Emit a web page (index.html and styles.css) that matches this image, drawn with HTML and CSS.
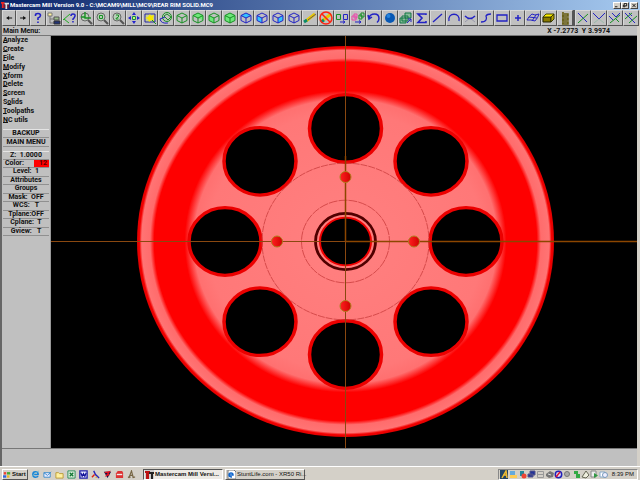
FILE: index.html
```
<!DOCTYPE html>
<html lang="en">
<head>
<meta charset="utf-8">
<title>Mastercam Mill Version 9.0</title>
<link rel="stylesheet" href="styles.css">
</head>
<body>
<svg class="defs" aria-hidden="true">
  <symbol id="cube" viewBox="0 0 16 16"><path d="M3 5.500 8 3l5 2.500v5L8 13l-5-2.500zM3 5.500 8 8l5-2.500M8 8v5"/></symbol>
  <symbol id="lens" viewBox="0 0 16 16"><path d="m10 10 4 4" stroke="#555" stroke-width="2"/><circle cx="7" cy="7" r="4" fill="#b8d0b8" stroke="#666" stroke-width="1"/></symbol>
</svg>

<header class="titlebar">
  <svg class="app-icon" viewBox="0 0 9 9"><path d="M0 1h4v2H3v5H1V3H0z" fill="#e22"/><path d="M4 2h5v2H7v5H5V4H4z" fill="#ddd"/><path d="M4 4v4M8 4v4" stroke="#a11"/></svg>
  <h1>Mastercam Mill Version 9.0 - C:\MCAM9\MILL\MC9\REAR RIM SOLID.MC9</h1>
  <div class="controls">
    <button aria-label="Minimize"><svg viewBox="0 0 7 6"><path d="M1 4.500h3"/></svg></button>
    <button aria-label="Restore"><svg viewBox="0 0 7 6"><path d="M2.500 2V.5h3v3H4M1.500 2.500h2v2h-2z"/></svg></button>
    <button class="close" aria-label="Close"><svg viewBox="0 0 7 6"><path d="m1.500 1 4 4m0-4-4 4"/></svg></button>
  </div>
</header>

<div class="app">
  <nav class="toolbar" aria-label="Tools">
    <button class="slim" aria-label="Previous"><svg viewBox="0 0 14 16"><path class="solid" d="m4 8 3-2v1.500h3v1H7V10z"/></svg></button>
    <button class="slim" aria-label="Next"><svg viewBox="0 0 14 16"><path class="solid" d="M10 8 7 6v1.500H4v1h3V10z"/></svg></button>
    <button aria-label="Help"><svg class="blue" viewBox="0 0 16 16"><path stroke-width="1.600" d="M5.500 6V5q0-1.500 2.500-1.500T10.500 5.500Q10.500 7 8 8v2M8 11.500V13"/></svg></button>
    <button aria-label="File manager"><svg viewBox="0 0 16 16"><path d="M2 3h4v3H2z" fill="#fff3a0" stroke="#777"/><path d="M4 6v7h4M4 9h4" stroke="#777"/><path d="M8 7h5v3H8z" fill="#9b8" stroke="#555"/><path d="M8 11h6v3H8z" fill="#237" stroke="#333"/></svg></button>
    <button aria-label="Analyze"><svg viewBox="0 0 16 16"><path d="m1 10 7-6M2 9l5 4" stroke="#2a2"/><path class="bl" stroke-width="1.500" d="M9 6q0-2 2-2 2.500 0 2 2T11 9v1M11 11v1.500"/></svg></button>
    <button aria-label="Zoom"><svg viewBox="0 0 16 16"><use href="#lens"/><path class="gr" stroke-width="1.400" d="M7 2v6h6M3 7h4"/></svg></button>
    <button aria-label="Zoom window"><svg viewBox="0 0 16 16"><use href="#lens"/><path class="gr" d="M5.500 5.500h3v3h-3z"/></svg></button>
    <button aria-label="Unzoom"><svg viewBox="0 0 16 16"><use href="#lens"/><path class="gr" d="M6 5h2.500v2L6 8.500V9h2.500"/></svg></button>
    <button aria-label="Fit"><svg viewBox="0 0 16 16"><path d="M6.500 6.500h3v3h-3z" fill="#cf7" stroke="#184"/><path fill="#22c" d="m8 2 2 3H6zM8 14l2-3H6zM2 8l3-2v4zM14 8l-3-2v4z"/></svg></button>
    <button aria-label="Repaint"><svg viewBox="0 0 16 16"><path d="M3 4h10v8H3z" fill="#c8d090" stroke="#22a"/><path d="m8 4 1 2 3-1-1 3 1 3-3-1-2 2-1-3-3-1 3-1z" fill="#f6e800"/><path d="m10 10 4 4" class="gr"/></svg></button>
    <button aria-label="Dynamic view"><svg viewBox="0 0 16 16"><circle class="gr" cx="9" cy="7" r="4.500"/><path class="gr" d="m6 6 3-2 4 3-3 3z"/><path class="bl" d="M2 9q1 5 8 4M2 9l5-2"/></svg></button>
    <button aria-label="Isometric view"><svg class="green" viewBox="0 0 16 16"><use href="#cube"/></svg></button>
    <button aria-label="Top view"><svg class="green" viewBox="0 0 16 16"><path class="mint" d="m3 5.500 5-2.500 5 2.500v5L8 8z"/><use href="#cube"/></svg></button>
    <button aria-label="Front view"><svg class="green" viewBox="0 0 16 16"><path class="mint" d="m3 5.500 5 2.500v5l-5-2.500z"/><use href="#cube"/></svg></button>
    <button aria-label="Side view"><svg class="green" viewBox="0 0 16 16"><path class="mint" d="m3 5.500 5-2.500 5 2.500v5L8 13l-5-2.500z"/><use href="#cube"/></svg></button>
    <button aria-label="Plane top"><svg class="blue" viewBox="0 0 16 16"><path class="cyan" d="m3 5.500 5-2.500 5 2.500L8 8z"/><use href="#cube"/></svg></button>
    <button aria-label="Plane front"><svg class="blue" viewBox="0 0 16 16"><path class="cyan" d="m3 5.500 5 2.500v5l-5-2.500z"/><use href="#cube"/></svg></button>
    <button aria-label="Plane side"><svg class="blue" viewBox="0 0 16 16"><path class="cyan" d="m8 8 5-2.500v5L8 13z"/><use href="#cube"/></svg></button>
    <button aria-label="Plane 3D"><svg class="blue" viewBox="0 0 16 16"><use href="#cube"/></svg></button>
    <button aria-label="Delete"><svg viewBox="0 0 16 16"><path d="m4 11 9-7" stroke="#e8c800" stroke-width="3"/><path d="m6 10 8-6" stroke="#655"/><path d="m2 12 3-2" stroke="#0a8a6a" stroke-width="3"/></svg></button>
    <button aria-label="Undelete"><svg viewBox="0 0 16 16"><path d="m4 11 9-7" stroke="#e8c800" stroke-width="3"/><path d="m3 12 3-2" stroke="#0a8a6a" stroke-width="3"/><circle cx="8" cy="8" r="6" stroke="#f21" stroke-width="1.500"/><path d="m4 4 8 8" stroke="#f21" stroke-width="1.500"/></svg></button>
    <button aria-label="Group result"><svg viewBox="0 0 16 16"><path class="gr" d="M2.500 4.500h4v5h-4z"/><path class="bl" d="M9.500 4.500h4v5h-4zM6 12h5M9 10.500l2 1.500-2 1.500"/></svg></button>
    <button aria-label="Translate"><svg viewBox="0 0 16 16"><path d="M2 6h4v4H2zM4 4h3v4H4z" stroke="#e4a"/><path class="gr" d="M9 5h3v4H9zM11 3h3v4h-3z"/><path class="bl" d="M5 12h6M9 10.500l2 1.500-2 1.500"/></svg></button>
    <button aria-label="Undo"><svg class="blue" viewBox="0 0 16 16"><path stroke-width="1.500" d="M3 8q1-4 5.500-4T13 8.500q0 2.500-2 4M2 5l1 4 3-2"/></svg></button>
    <button aria-label="Shade"><svg viewBox="0 0 16 16"><circle cx="8" cy="8" r="5" fill="#0758b4"/><circle cx="6.500" cy="6" r="2" fill="#2583dc"/></svg></button>
    <button aria-label="Level"><svg viewBox="0 0 16 16"><path d="M2 8h6v5H2zM7 3h6v5H7z" fill="#8b9" stroke="#174"/><path d="M4 6h6v5H4z" stroke="#174"/><path class="bl" d="m9 13 4-4m-3 0h3v3"/></svg></button>
    <button aria-label="Sum"><svg class="blue" viewBox="0 0 16 16"><path stroke-width="1.600" d="M12 5V4H4l4 4-4 4.500h8V11"/></svg></button>
    <button aria-label="Line"><svg class="blue" viewBox="0 0 16 16"><path stroke-width="1.300" d="m3 12 9-8"/></svg></button>
    <button aria-label="Arc"><svg class="blue" viewBox="0 0 16 16"><path stroke-width="1.300" d="M3 11C1 2 15 2 13 11"/></svg></button>
    <button aria-label="Fillet"><svg viewBox="0 0 16 16"><path d="m3 12 5-4 5 4" stroke="#99a"/><path class="bl" stroke-width="1.500" d="M3 6q5 5 10 0"/></svg></button>
    <button aria-label="Spline"><svg class="blue" viewBox="0 0 16 16"><path stroke-width="1.300" d="M3 12q4 0 5-2T8 6q1-2 5-2"/></svg></button>
    <button aria-label="Rectangle"><svg class="blue" viewBox="0 0 16 16"><path stroke-width="1.300" d="M3 5h10v6H3z"/></svg></button>
    <button aria-label="Point"><svg class="blue" viewBox="0 0 16 16"><path stroke-width="1.500" d="M8 5v6M5 8h6"/></svg></button>
    <button aria-label="Surface"><svg class="blue" viewBox="0 0 16 16"><path d="M2 10q2-4 5-6l3 1 4-1q-1 4-4 7l-4-1zM4 7l8 1M7 11l4-6"/></svg></button>
    <button aria-label="Solid"><svg viewBox="0 0 16 16"><path d="M2 7h8v5H2z" fill="#8a7a00" stroke="#220"/><path d="m2 7 3-3h8l-3 3z" fill="#fff000" stroke="#440"/><path d="m10 7 3-3v5l-3 3z" fill="#bba800" stroke="#330"/></svg></button>
    <button aria-label="Toolpath"><svg viewBox="0 0 16 16"><path d="M6 2v12M7 4h4v2H5M7 8h4v2H5M7 12h4v2H5" stroke="#665c12" stroke-width="1.600"/></svg></button>
    <button class="apart" aria-label="Trim one"><svg viewBox="0 0 16 16"><path class="bl" d="m3 3 9 9"/><path class="gr" d="m3 13 10-9"/></svg></button>
    <button aria-label="Trim two"><svg viewBox="0 0 16 16"><path class="bl" d="m2 3 6 6 6-6"/><path d="m3 13 5-4 5 4" stroke="#9ba"/></svg></button>
    <button aria-label="Trim three"><svg viewBox="0 0 16 16"><path class="bl" d="m5 3 4 4 4-4M2 6l4 4"/><path class="gr" d="m3 13 10-8M9 9l3 3"/></svg></button>
    <button aria-label="Trim divide"><svg viewBox="0 0 16 16"><path class="bl" d="m2 3 10 10M6 3l3 3"/><path class="gr" d="m2 9 7-6M6 13l8-7"/></svg></button>
  </nav>

  <div class="prompt"><span>Main Menu:</span><span>X -7.2773&nbsp; Y 3.9974</span></div>

  <main class="work">
    <aside class="panel">
      <nav class="menu" aria-label="Main menu">
        <button><u>A</u>nalyze</button><button><u>C</u>reate</button><button><u>F</u>ile</button><button><u>M</u>odify</button><button><u>X</u>form</button><button><u>D</u>elete</button><button><u>S</u>creen</button><button>S<u>o</u>lids</button><button><u>T</u>oolpaths</button><button><u>N</u>C utils</button>
      </nav>
      <div class="keys nav-keys"><button>BACKUP</button><button>MAIN MENU</button></div>
      <div class="keys settings">
        <button>Z:&nbsp; 1.0000</button><button class="color"><span>Color:</span><span class="swatch">12</span></button><button>Level:&nbsp; 1</button><button>Attributes</button><button>Groups</button><button>Mask:&nbsp; OFF</button><button>WCS:&nbsp;&nbsp; T</button><button>Tplane:OFF</button><button>Cplane:&nbsp; T</button><button>Gview:&nbsp;&nbsp; T</button>
      </div>
    </aside>

    <svg class="viewport" viewBox="51 36 586 412" role="img" aria-label="Rear rim solid model">
      <defs>
        <radialGradient id="rim" gradientUnits="userSpaceOnUse" cx="0" cy="0" r="209">
          <stop offset="0" stop-color="#ff8080"/><stop offset=".66" stop-color="#ff7878"/><stop offset=".725" stop-color="#ff7070"/><stop offset=".77" stop-color="#fe0000"/><stop offset=".915" stop-color="#fe0000"/><stop offset=".935" stop-color="#ff6c6c"/><stop offset=".975" stop-color="#ff7474"/><stop offset=".986" stop-color="#f40000"/><stop offset="1" stop-color="#d80000"/>
        </radialGradient>
        <linearGradient id="bolt"><stop offset="0" stop-color="#ff2020"/><stop offset="1" stop-color="#d00000"/></linearGradient>
        <g id="hole"><circle r="36" fill="#000" stroke="#ec0000" stroke-width="3.500"/></g>
        <circle id="pin" r="5.500" fill="url(#bolt)" stroke="#b08020" stroke-width="1"/>
      </defs>
      <g transform="translate(345.500 241.500) scale(1 .938)">
        <circle r="208.500" fill="url(#rim)"/>
        <use href="#hole" x="120.500"/><use href="#hole" x="-120.500"/><use href="#hole" y="120.500"/><use href="#hole" y="-120.500"/>
        <use href="#hole" x="85.500" y="85.500"/><use href="#hole" x="-85.500" y="85.500"/><use href="#hole" x="85.500" y="-85.500"/><use href="#hole" x="-85.500" y="-85.500"/>
        <g fill="none"><circle r="83.500" stroke="#c83c3c" stroke-width=".8" stroke-dasharray="7 1"/><circle r="44" stroke="#c83c3c" stroke-width=".8" stroke-dasharray="9 1"/></g>
        <circle r="30" fill="#ff7c7c" stroke="#500000" stroke-width="2.800"/>
        <circle r="25.500" fill="#000" stroke="#f00000" stroke-width="2"/>
      </g>
      <g fill="none" stroke="#8a4810"><path d="M345.500 36v412M51 241.500h586"/><path d="M345.500 241V156M345.500 241.500H637" stroke="#8c4600" stroke-width="1.500"/></g>
      <g transform="translate(345.500 241.500)"><use href="#pin" x="68.500"/><use href="#pin" x="-68.500"/><use href="#pin" y="64.500"/><use href="#pin" y="-64.500"/></g>
    </svg>
  </main>
  <div class="status"></div>
</div>

<footer class="taskbar">
  <button class="start"><svg viewBox="0 0 10 10"><path fill="#e43" d="M1 2h3v3H1z"/><path fill="#4a3" d="M5 2h4v3H5z"/><path fill="#36d" d="M0 6h4v3H0z"/><path fill="#eb2" d="M5 6h3v3H5z"/></svg>Start</button>
  <nav class="quick" aria-label="Quick launch">
    <button aria-label="Internet Explorer"><svg viewBox="0 0 10 10"><path d="M2 5h6q0-3-3-3T2 5q0 3 3 3 2 0 3-1" stroke="#1784d8" stroke-width="1.600"/><path d="M1 8Q3 3 9 1" stroke="#7bc"/></svg></button>
    <button aria-label="Outlook Express"><svg viewBox="0 0 10 10"><path d="M1 3h7v5H1z" fill="#eef" stroke="#38c"/><path d="m1 3 4 3 4-4" stroke="#38c"/></svg></button>
    <button aria-label="Explorer"><svg viewBox="0 0 10 10"><path d="M1 3h3l1 1h4v5H1z" fill="#fff1a0" stroke="#b93"/></svg></button>
    <button aria-label="Excel"><svg viewBox="0 0 10 10"><path d="M1 1h8v8H1z" fill="#dfeedd" stroke="#285"/><path d="m3 3 4 4m0-4L3 7" stroke="#173" stroke-width="1.400"/></svg></button>
    <button aria-label="Word"><svg viewBox="0 0 10 10"><path d="M1 1h8v8H1z" fill="#eef" stroke="#22a" stroke-width="1.500"/><path d="m2 3 1.500 4L5 4l1.500 3L8 3" stroke="#119" stroke-width="1.400"/></svg></button>
    <button aria-label="Design editor"><svg viewBox="0 0 10 10"><path d="m3 1 2 4 4 4" stroke="#22b" stroke-width="1.500"/><path d="M1 8 4 5" stroke="#d21" stroke-width="1.500"/><path d="M5 8h2" stroke="#e90"/></svg></button>
    <button aria-label="Mastercam"><svg viewBox="0 0 10 10"><path d="M1 2h8L5 9z" fill="#114"/><path d="m2 3 5-1-3 4 3-1" stroke="#d12" stroke-width="1.500"/></svg></button>
    <button aria-label="Reader"><svg viewBox="0 0 10 10"><path d="M3 1h5l1 2v6H1V4z" fill="#d33"/><path d="M2 5h6" stroke="#eee" stroke-width="1.500"/></svg></button>
    <button aria-label="Drafting"><svg viewBox="0 0 10 10"><path d="M2 9 5 1l2 8M3 6h4M1 8h3M6 8h3" stroke="#764" stroke-width="1.300"/></svg></button>
  </nav>
  <button class="task active"><svg viewBox="0 0 9 9"><path d="M0 0h9v9H0z" fill="#ccc"/><path d="M0 1h5v2H4v6H1V3H0z" fill="#b11"/><path d="M4 2h5v2H8v5H6V4H4z" fill="#222"/></svg><span>Mastercam Mill Versi...</span></button>
  <button class="task"><svg viewBox="0 0 9 9"><path d="M1 0h6l2 2v7H1z" fill="#fff" stroke="#777"/><path d="M2 5h4q0-2-2-2T2 5q0 2 3 2" stroke="#16c" stroke-width="1.500"/></svg><span>StuntLife.com - XR50 Ri...</span></button>
  <div class="tray">
    <svg viewBox="0 0 9 9"><path d="M0 0h8v9H0z" fill="#246"/><path d="m2 8 4-7 1 7M3 5h4" stroke="#eb3" stroke-width="1.500"/></svg>
    <svg viewBox="0 0 9 9"><path d="M1 1h5v4H1z" fill="#6ad"/><path d="M1 5h7v3H1z" fill="#fc5"/></svg>
    <svg viewBox="0 0 9 9"><path d="M2 1h4v5H2z" fill="#289"/><circle cx="6" cy="6" r="2.500" fill="#e43"/></svg>
    <svg viewBox="0 0 9 9"><path d="M3 1h5v4H3zM1 4h5v3H1z" fill="#239" stroke="#558"/></svg>
    <svg viewBox="0 0 9 9"><path d="M1.500 1.500h6v6h-6zM2 4.500h5" stroke="#999"/></svg>
    <svg viewBox="0 0 9 9"><path d="m1 4 4-3 4 2-1 4-4 1-3-2z" fill="#777"/><path d="m3 4 3 1" stroke="#ddd"/></svg>
    <svg viewBox="0 0 9 9"><circle cx="4.500" cy="4.500" r="3.200" fill="#dde" stroke="#22b" stroke-width="1.500"/><path d="m2 7 4-5" stroke="#d13" stroke-width="1.500"/></svg>
    <svg viewBox="0 0 9 9"><circle cx="4" cy="4" r="2.500" fill="#aaa" stroke="#777"/></svg>
    <svg viewBox="0 0 9 9"><path d="M2 1h4v3H2zM4 4h4v4H4z" fill="#3a4"/></svg>
    <svg viewBox="0 0 9 9"><path d="m1 7 4-6 3 4-3 3z" fill="#eed" stroke="#665"/></svg>
    <svg viewBox="0 0 9 9"><path d="M1 1h5v6H1z" fill="#eee" stroke="#888"/><path d="m4 3 4 2.500L4 8z" fill="#394"/></svg>
    <svg viewBox="0 0 9 9"><path d="M1 2h5v5H1z" fill="#fff" stroke="#8ac"/><circle cx="6" cy="5" r="2.500" fill="#eef" stroke="#79b"/></svg>
    <time>8:39 PM</time>
  </div>
</footer>
</body>
</html>
```
FILE: styles.css
```
* { box-sizing: border-box; }

body {
  margin: 0;
  height: 100vh;
  display: flex;
  flex-direction: column;
  overflow: hidden;
  background: #d4d0c8;
  color: #111;
  font: bold 7px/8px Roboto, "Liberation Sans", sans-serif;
}

button {
  margin: 0;
  padding: 0;
  border: 0;
  background: none;
  color: inherit;
  font: inherit;
}

svg { display: block; fill: none; }
.defs { position: absolute; width: 0; height: 0; }

.titlebar {
  display: flex;
  align-items: center;
  gap: 1px;
  height: 10px;
  padding: 0 2px 0 1px;
  background: linear-gradient(90deg, #0a246a, #a6caf0);
  color: #fff;
}
.app-icon { width: 8px; height: 8px; }
.titlebar h1 { flex: 1; margin: 0; font: inherit; font-size: 6px; white-space: nowrap; }
.controls { display: flex; }
.controls button {
  width: 8px;
  height: 7px;
  background: #d4d0c8;
  border: 1px solid;
  border-color: #fff #444 #444 #fff;
}
.controls .close { margin-left: 1px; }
.controls svg { width: 100%; height: 100%; stroke: #000; }

.app {
  flex: 1;
  min-height: 0;
  display: flex;
  flex-direction: column;
  background: #c0c0c0;
  border-left: 2px solid #666;
  border-right: 3px solid #d4d0c8;
}

.toolbar { display: flex; height: 16px; margin-right: -2px; background: #555; }
.toolbar button {
  flex: 16 1 0;
  min-width: 0;
  background: #c0c0c0;
  border: 1px solid;
  border-color: #d8d8d8 #555 #555 #d8d8d8;
}
.toolbar .slim { flex-grow: 14; }
.toolbar .apart { margin-left: 2px; }
.toolbar svg { width: calc(100% + 2px); height: 16px; margin: -1px; }
.solid { fill: #111; }
.blue, .bl { stroke: #2222c4; }
.green, .gr { stroke: #169022; }
.mint { fill: #6ee87a; stroke: none; }
.cyan { fill: #35c4ff; stroke: none; }

.prompt {
  display: flex;
  justify-content: space-between;
  height: 10px;
  padding: 1px 27px 0 1px;
  border-bottom: 1px solid #777;
  white-space: nowrap;
}

.work { flex: 1; min-height: 0; display: flex; background: #000; }
.panel { width: 49px; background: #c0c0c0; border-right: 1px solid #999; }
.menu { display: grid; grid-template-rows: repeat(10, 1fr); height: 88px; }
.menu button { padding-left: 1px; line-height: 8px; text-align: left; }
.menu u { text-underline-offset: 0; }
.keys { display: grid; grid-auto-rows: 1fr; padding: 0 1px; }
.keys button {
  display: flex;
  align-items: center;
  justify-content: center;
  min-height: 0;
  line-height: 7px;
  border-bottom: 1px solid #909090;
  white-space: nowrap;
}
.keys button:first-child { border-top: 1px solid #e4e4e4; }
.nav-keys { height: 18px; margin-top: 5px; }
.settings { height: 85px; margin-top: 4px; }
.keys .color { justify-content: space-between; padding-left: 2px; }
.swatch { width: 15px; background: #f00; color: #500; text-align: right; padding-right: 2px; }

.viewport { flex: 1; min-width: 0; height: 100%; }

.status { height: 18px; border-top: 1px solid #777; }

.taskbar {
  display: flex;
  align-items: center;
  height: 14px;
  padding: 1px 2px 0;
  border-top: 1px solid #fff;
  font: 6px/8px "Liberation Sans", sans-serif;
  white-space: nowrap;
}
.taskbar svg { flex: none; width: 9px; height: 9px; }
.start, .task {
  display: flex;
  align-items: center;
  gap: 1px;
  height: 11px;
  border: 1px solid;
  border-color: #fff #555 #555 #fff;
}
.start { width: 26px; font-weight: bold; }
.start svg { width: 8px; }
.quick { display: flex; gap: 3px; width: 115px; padding-left: 3px; }
.task { width: 80px; gap: 1px; padding-left: 1px; margin-right: 2px; }
.task.active { background: #edeae5; border-color: #555 #fff #fff #555; font-weight: bold; }
.tray {
  display: flex;
  align-items: center;
  margin-left: auto;
  height: 11px;
  padding: 0 3px 0 1px;
  border: 1px solid;
  border-color: #888 #fff #fff #888;
}
.tray time { margin-left: 4px; }
```
